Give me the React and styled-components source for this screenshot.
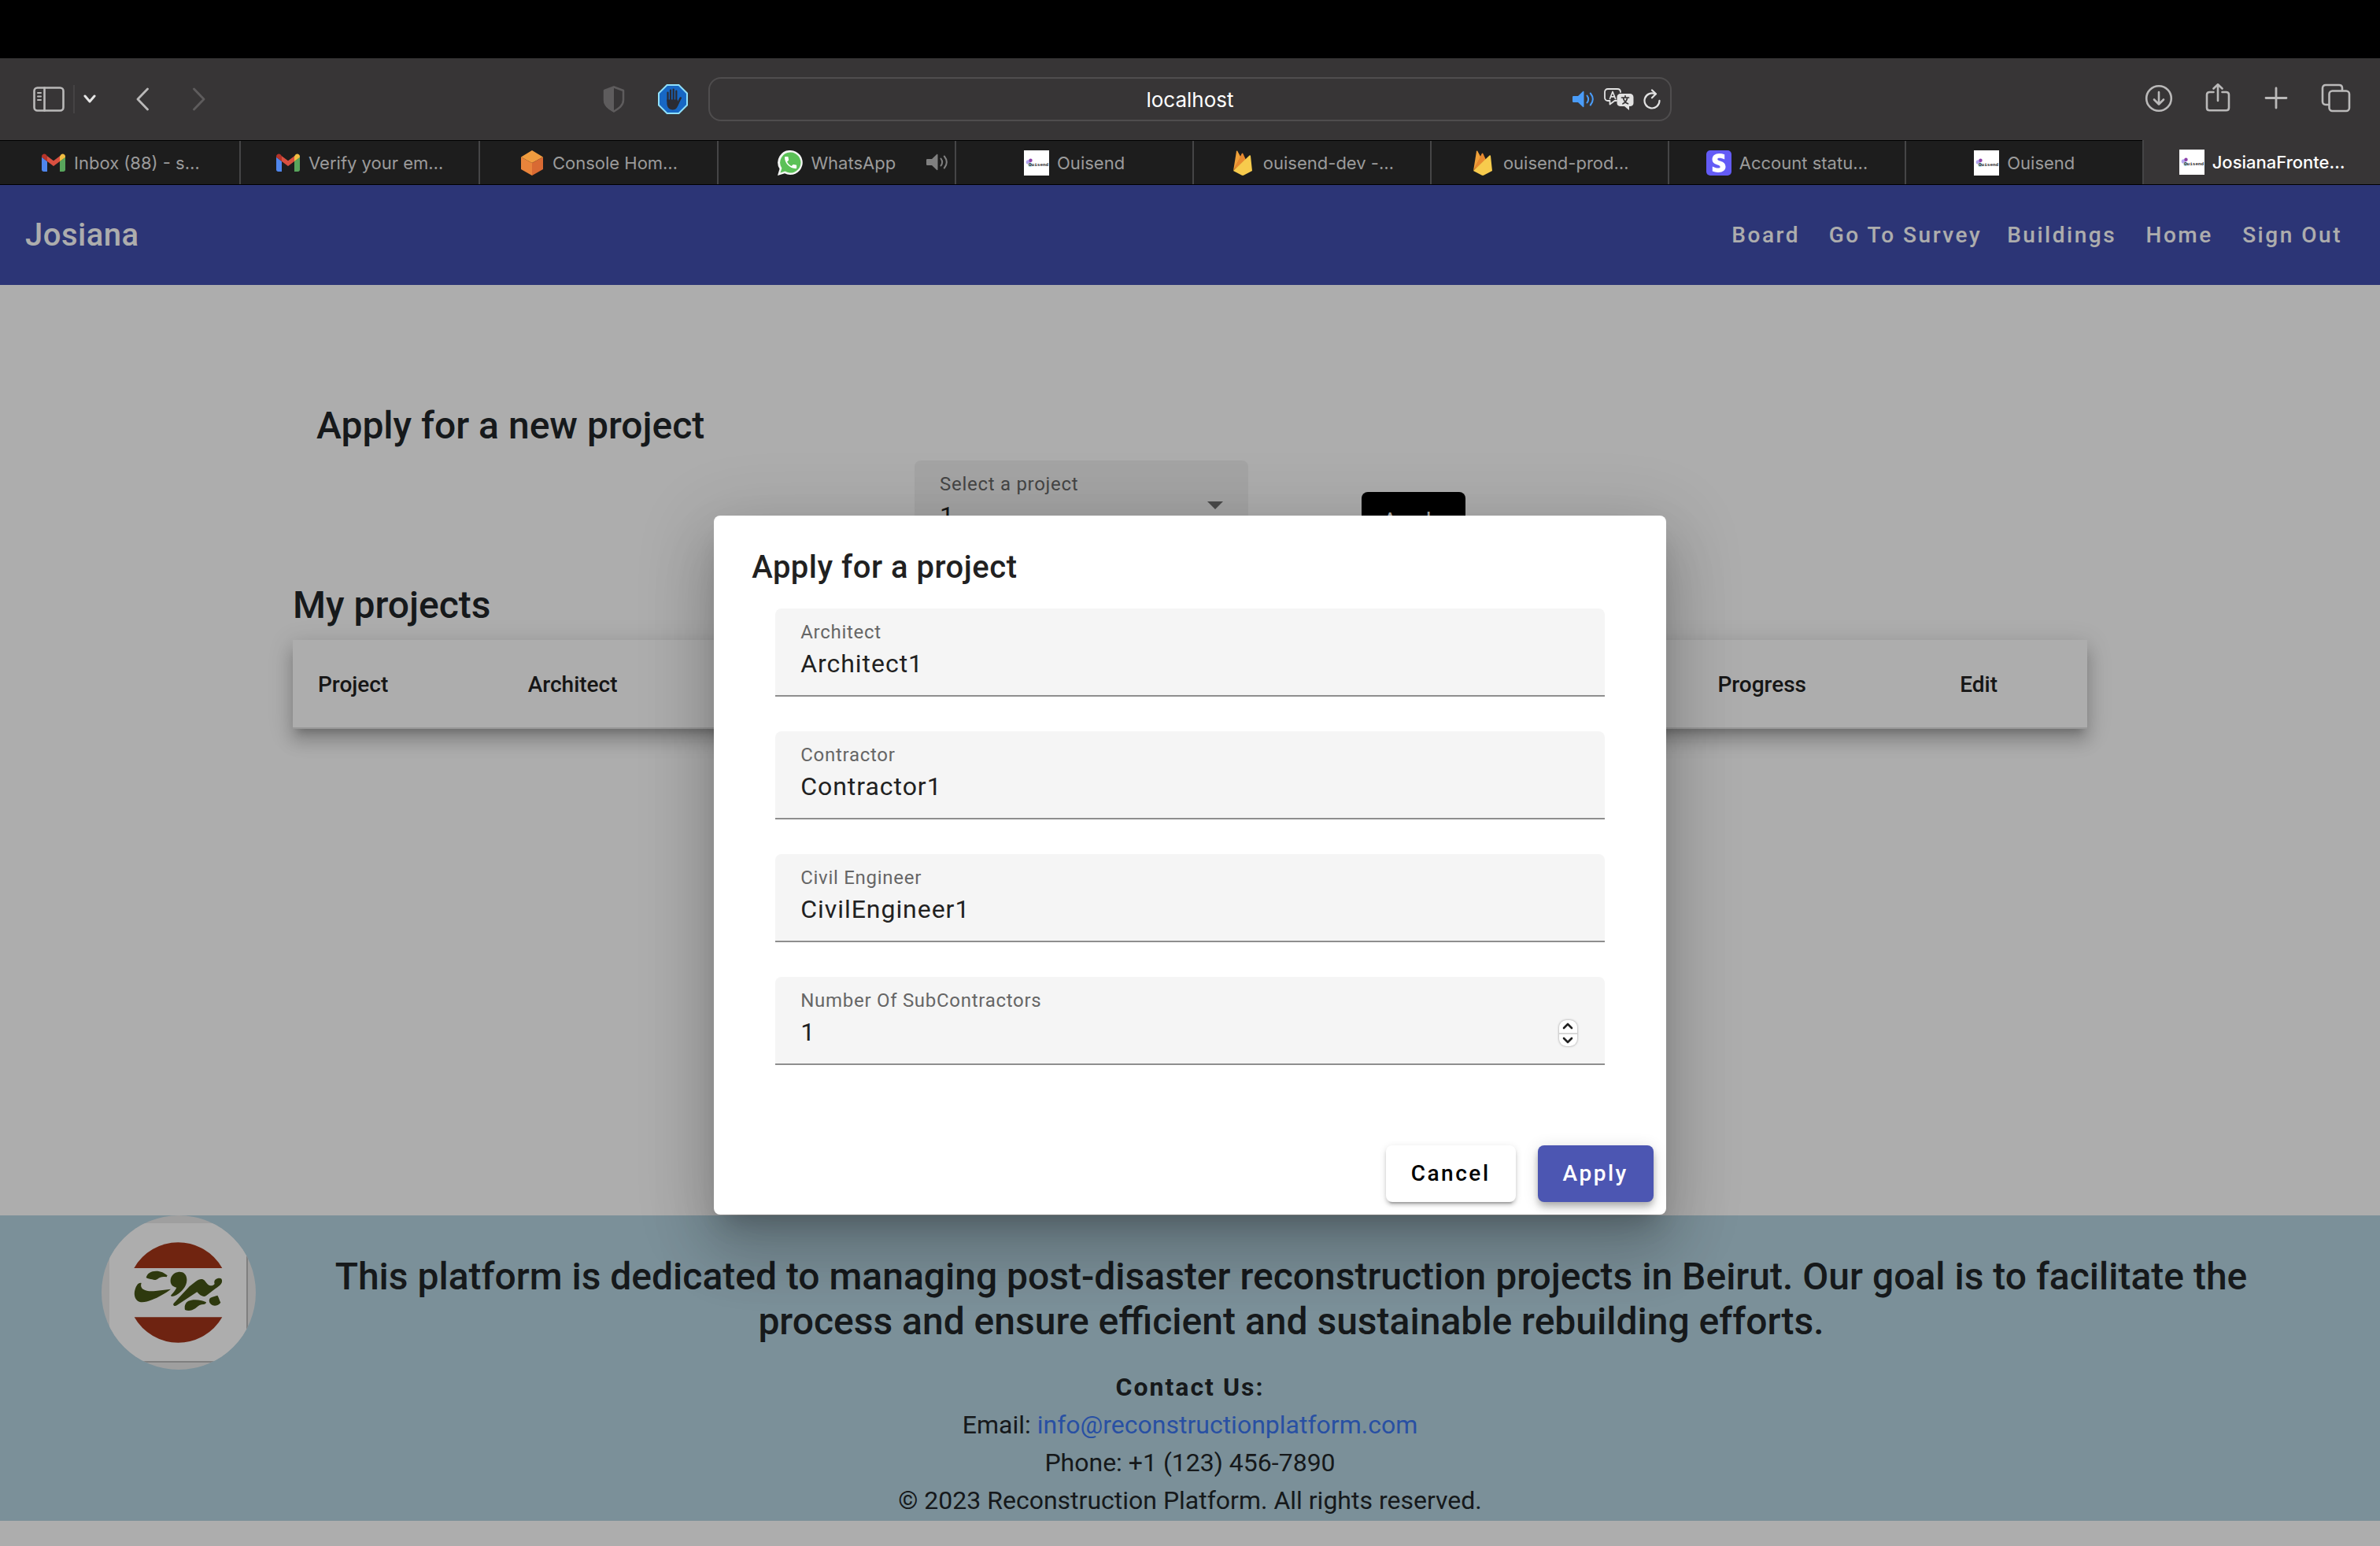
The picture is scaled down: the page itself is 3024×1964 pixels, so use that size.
import React from 'react';
import styled, { createGlobalStyle } from 'styled-components';
import { FaStripeS } from 'react-icons/fa';

const GlobalStyle = createGlobalStyle`
  *, *::before, *::after { box-sizing: border-box; }
  html, body, #root { height: 100%; }
  body { margin: 0; background: #000; font-family: Roboto, "Noto Sans", sans-serif; }
  h1, h2, p { margin: 0; }
  button, input, select { font: inherit; color: inherit; letter-spacing: inherit; }
  svg { display: block; flex: none; }
`;

const Screen = styled.div`
  min-height: 100%;
  display: flex;
  flex-direction: column;
`;

/* ---------- browser window ---------- */

const Chrome = styled.header`
  padding-top: 74px;
  font-family: Inter, "Open Sans", sans-serif;
  background: #000;
`;

const Toolbar = styled.div`
  display: grid;
  grid-template-columns: 1fr minmax(0, 1224px) 1fr;
  align-items: center;
  height: 104px;
  background: #373536;
`;

const ToolGroup = styled.div`
  display: flex;
  align-items: center;
  justify-content: ${(p) => (p.$end ? 'flex-end' : 'flex-start')};
  gap: ${(p) => p.$gap || 0}px;
  padding: ${(p) => p.$pad || 0};
  margin-left: ${(p) => (p.$push ? 'auto' : 0)};
`;

const ToolButton = styled.button`
  display: flex;
  align-items: center;
  justify-content: center;
  padding: 0;
  border: 0;
  background: none;
  color: ${(p) => (p.$dim ? '#5e5c5d' : '#bab9b9')};
`;

const ToolDivider = styled.span`
  width: 2px;
  height: 36px;
  background: #454344;
`;

const AddressBar = styled.div`
  display: grid;
  grid-template-columns: 120px 1fr 120px;
  align-items: center;
  height: 56px;
  border: 2px solid #4f4d4e;
  border-radius: 16px;
  color: #e2e2e2;
`;

const AddressInput = styled.input`
  grid-column: 2;
  min-width: 0;
  width: 100%;
  height: 40px;
  padding: 0;
  border: 0;
  outline: 0;
  background: none;
  color: #fff;
  font-size: 26px;
  text-align: center;
`;

const TabStrip = styled.nav`
  display: grid;
  grid-template-columns: repeat(3, minmax(0, 304fr)) repeat(7, minmax(0, 302fr));
  height: 57px;
`;

const Tab = styled.button`
  position: relative;
  display: flex;
  align-items: center;
  justify-content: center;
  gap: 10px;
  margin: ${(p) => (p.$active ? '0 0 1px' : '1px 0 1px')};
  padding: 0;
  border: 0;
  border-left: 2px solid ${(p) => (p.$first ? 'transparent' : '#454546')};
  background: ${(p) => (p.$active ? '#373536' : '#1d1d1d')};
  color: ${(p) => (p.$active ? '#fff' : '#9b9b9b')};
  font-size: 22px;
  font-weight: ${(p) => (p.$active ? 500 : 400)};
  white-space: nowrap;
`;

const TabAudio = styled.span`
  position: absolute;
  right: 8px;
  top: 16px;
  color: #808080;
`;

/* ---------- page ---------- */

const Page = styled.div`
  position: relative;
  flex: 1;
  display: flex;
  flex-direction: column;
  padding-bottom: 32px;
  background: #fff;
  color: #212529;
  overflow: hidden;
`;

const AppBar = styled.div`
  display: flex;
  align-items: center;
  justify-content: space-between;
  height: 127px;
  padding: 0 32px;
  background: #424fae;
  color: #fff;
`;

const Brand = styled.h1`
  font-size: 40px;
  line-height: 64px;
  font-weight: 500;
  letter-spacing: 0.0125em;
`;

const NavList = styled.nav`
  display: flex;
`;

const NavLink = styled.a`
  min-width: 128px;
  padding: 0 16px;
  font-size: 28px;
  line-height: 72px;
  font-weight: 500;
  letter-spacing: 0.09em;
  text-align: center;
  text-decoration: none;
  color: inherit;
`;

const Main = styled.main`
  flex: 1;
  width: 100%;
  max-width: 2280px;
  margin: 0 auto;
  padding-top: 150px;
`;

const Heading = styled.h2`
  padding-left: ${(p) => (p.$inset ? 30 : 0)}px;
  font-size: 48px;
  line-height: 58px;
  font-weight: 500;
`;

const ApplyRow = styled.div`
  display: flex;
  justify-content: center;
  align-items: flex-end;
  gap: 144px;
  margin: 15px 0 43px;
`;

const FieldBox = styled.div`
  position: relative;
  display: flex;
  flex-direction: column;
  gap: 2px;
  width: ${(p) => (p.$narrow ? '424px' : '100%')};
  height: 112px;
  padding: 16px 32px;
  border-bottom: 2px solid #8e8e8e;
  border-radius: 8px 8px 0 0;
  background: ${(p) => (p.$narrow ? '#f2f2f2' : '#f5f5f5')};
`;

const FieldLabel = styled.label`
  font-size: 24px;
  line-height: 28px;
  letter-spacing: 0.03em;
  color: #666;
`;

const FieldLine = styled.div`
  display: flex;
  align-items: center;
  height: 48px;
`;

const FieldInput = styled.input`
  flex: 1;
  min-width: 0;
  height: 48px;
  padding: 0;
  border: 0;
  outline: 0;
  background: none;
  color: #212121;
  font-size: 32px;
  letter-spacing: 0.03em;
  appearance: textfield;
  &::-webkit-inner-spin-button,
  &::-webkit-outer-spin-button { appearance: none; margin: 0; }
`;

const FieldSelect = styled.select`
  flex: 1;
  height: 48px;
  padding: 0;
  border: 0;
  outline: 0;
  background: none;
  color: #212121;
  font-size: 32px;
  appearance: none;
`;

const SelectArrow = styled.svg`
  position: absolute;
  right: 32px;
  top: 52px;
  pointer-events: none;
`;

const Stepper = styled.span`
  display: flex;
  flex-direction: column;
  width: 23px;
  height: 33px;
  margin: 4px 3px 0 0;
  border-radius: 9px;
  background: #fff;
  box-shadow: 0 0 3px rgba(0, 0, 0, 0.4);
`;

const StepButton = styled.button`
  flex: 1;
  display: flex;
  align-items: center;
  justify-content: center;
  padding: 0;
  border: 0;
  border-bottom: ${(p) => (p.$up ? '2px solid #d8d8d8' : '0')};
  background: none;
  color: #222;
`;

const DarkButton = styled.button`
  min-width: 132px;
  height: 72px;
  padding: 0 24px;
  border: 0;
  border-radius: 8px;
  background: #000;
  color: #fff;
  font-size: 28px;
  letter-spacing: 0.06em;
`;

const ProjectTable = styled.table`
  width: 100%;
  margin-top: 15px;
  border-collapse: collapse;
  table-layout: fixed;
  background: #fff;
  box-shadow: 0 10px 10px -6px rgba(0, 0, 0, 0.2), 0 16px 20px 2px rgba(0, 0, 0, 0.14),
    0 6px 28px 4px rgba(0, 0, 0, 0.12);
`;

const HeadCell = styled.th`
  width: ${(p) => p.$width};
  height: 112px;
  padding: 2px 32px 0;
  border-bottom: 2px solid #e0e0e0;
  color: #212121;
  font-size: 28px;
  font-weight: 500;
  text-align: left;
`;

const Footer = styled.footer`
  padding-bottom: 2px;
  background: #b5d5e2;
  text-align: center;
`;

const FooterTop = styled.div`
  display: flex;
  align-items: flex-start;
  height: 194px;
  padding: 0 68px 0 129px;
`;

const Mission = styled.h2`
  flex: 1;
  padding: 49px 24px 0;
  font-size: 48px;
  line-height: 57px;
  font-weight: 500;
`;

const Contact = styled.address`
  font-size: 32px;
  line-height: 48px;
  font-style: normal;
`;

const ContactTitle = styled.strong`
  letter-spacing: 2px;
`;

const MailLink = styled.a`
  color: #3c76f0;
  text-decoration: none;
`;

/* ---------- dialog ---------- */

const Backdrop = styled.div`
  position: absolute;
  inset: 0;
  display: flex;
  align-items: center;
  justify-content: center;
  padding-bottom: 2px;
  background: rgba(0, 0, 0, 0.32);
`;

const Dialog = styled.form`
  width: 40%;
  border-radius: 8px;
  background: #fff;
  box-shadow: 0 22px 30px -14px rgba(0, 0, 0, 0.2), 0 48px 76px 6px rgba(0, 0, 0, 0.14),
    0 18px 92px 16px rgba(0, 0, 0, 0.12);
`;

const DialogTitle = styled.h2`
  padding: 34px 48px 20px;
  color: #212121;
  font-size: 40px;
  line-height: 64px;
  font-weight: 500;
  letter-spacing: 0.0125em;
`;

const DialogFields = styled.div`
  display: flex;
  flex-direction: column;
  gap: 44px;
  padding: 0 78px 86px;
`;

const DialogActions = styled.div`
  display: flex;
  justify-content: flex-end;
  gap: 28px;
  padding: 16px;
`;

const RaisedButton = styled.button`
  height: 72px;
  padding: 0 32px;
  border: 0;
  border-radius: 8px;
  background: ${(p) => (p.$primary ? '#4c56b2' : '#fff')};
  color: ${(p) => (p.$primary ? '#fff' : '#000')};
  font-size: 28px;
  font-weight: 500;
  letter-spacing: 0.09em;
  box-shadow: ${(p) =>
    p.$primary
      ? '0 4px 8px -2px rgba(0,0,0,.2), 0 8px 10px rgba(0,0,0,.14), 0 2px 20px rgba(0,0,0,.12)'
      : '0 6px 2px -4px rgba(0,0,0,.2), 0 4px 4px rgba(0,0,0,.14), 0 2px 10px rgba(0,0,0,.12)'};
`;

/* ---------- icons ---------- */

const stroke = (width) => ({
  fill: 'none',
  stroke: 'currentColor',
  strokeWidth: width,
  strokeLinecap: 'round',
  strokeLinejoin: 'round',
});

const SidebarIcon = () => (
  <svg width="40" height="32" viewBox="0 0 40 32" {...stroke(2.6)}>
    <rect x="1.5" y="1.5" width="37" height="29" rx="4" />
    <path d="M14.5 1.5v29" />
    <path d="M6 8h4M6 12.500h4M6 17h4" strokeWidth="2" />
  </svg>
);
const ChevronDown = () => (
  <svg width="16" height="12" viewBox="0 0 16 12" {...stroke(3)} stroke="#e6e6e6">
    <path d="M2 2l6 7 6-7" />
  </svg>
);
const Back = () => (
  <svg width="16" height="30" viewBox="0 0 16 30" {...stroke(2.8)}>
    <path d="M14.500 2L2 15l12.500 13" />
  </svg>
);
const Forward = () => (
  <svg width="16" height="30" viewBox="0 0 16 30" {...stroke(2.8)}>
    <path d="M1.500 2L14 15 1.500 28" />
  </svg>
);
const Shield = () => (
  <svg width="28" height="34" viewBox="0 0 28 34">
    <path d="M14 1.500L26 6v12c0 7-6 11-12 14.500C8 29 2 25 2 18V6z" {...stroke(2.500)} />
    <path d="M14 1L1 6v12c0 7.500 6.500 12 13 15.500z" fill="currentColor" />
  </svg>
);
const StopHand = () => (
  <svg width="38" height="38" viewBox="0 0 38 38">
    <path d="M11.500 1h15L37 11.500v15L26.500 37h-15L1 26.500v-15z" fill="#1767c4" stroke="#8fe0fb" strokeWidth="2" />
    <g stroke="#2b2b33" strokeLinecap="round" fill="none">
      <path d="M12.500 10.500v11M16 7.500v13M19.700 6.500v13M23.300 8.500v12" strokeWidth="2.200" />
      <path d="M28.700 17.500L24.500 26" strokeWidth="2.600" />
    </g>
    <path d="M11.400 19.500h13l2.100 4c-1.500 6-3.500 9-7.700 9-5 0-7.400-4-7.400-8.500z" fill="#2b2b33" />
  </svg>
);
const Speaker = ({ color = 'currentColor' }) => (
  <svg width="28" height="22" viewBox="0 0 28 22">
    <path d="M1.500 7h5.500L13 1.200c.8-.7 1.500-.3 1.500.6v18.400c0 .9-.8 1.300-1.500.6L7 15H1.500C.6 15 0 14.600 0 13.800V8.200C0 7.400.6 7 1.500 7z" fill={color} />
    <path d="M18.500 6.500c2 2.700 2 6.300 0 9M22.800 3.500c3.800 4.700 3.800 10.300 0 15" fill="none" stroke={color} strokeWidth="2" strokeLinecap="round" />
  </svg>
);
const Translate = () => (
  <svg width="38" height="28" viewBox="0 0 38 28">
    <path d="M16 16h-2.500L7.500 20.500V16H5c-2.500 0-4-1.500-4-4V5c0-2.500 1.500-4 4-4h12c2.500 0 4 1.500 4 4" {...stroke(1.800)} />
    <path d="M7.500 13.500L11 4.500l3.500 9M8.600 10.800h4.800" {...stroke(1.700)} />
    <path d="M21 7h12c2.500 0 4.500 1.500 4.500 4.500V19c0 2.500-2 4-4.500 4h-1v5l-6-5h-5c-2.500 0-4.500-1.500-4.500-4v-7.500C16.500 8.500 18.500 7 21 7z" fill="currentColor" />
    <path d="M22.500 12h9M27 9.800V12M24 19.800c3.500-1.600 5-4 5.700-7.800M24.500 12.500c.8 3.500 2.700 6 6 7.300" {...stroke(1.700)} stroke="#373536" />
  </svg>
);
const Reload = () => (
  <svg width="22" height="26" viewBox="0 0 22 26" {...stroke(2.200)}>
    <path d="M20.500 14.800A9.500 9.500 0 1 1 15.500 6.600" />
    <path d="M11 1.500l5 4.800-5 5" />
  </svg>
);
const Download = () => (
  <svg width="40" height="40" viewBox="0 0 40 40" {...stroke(2.600)}>
    <circle cx="20" cy="19" r="15.800" />
    <path d="M20 11v15.500M14 20.500l6 6 6-6" />
  </svg>
);
const Share = () => (
  <svg width="40" height="40" viewBox="0 0 40 40" {...stroke(2.600)}>
    <path d="M14.500 11H9.500C7.500 11 6 12.200 6 14.200V31c0 2 1.500 3.300 3.500 3.300h21c2 0 3.500-1.300 3.500-3.300V14.200c0-2-1.500-3.200-3.500-3.200h-5" />
    <path d="M20 22V1.300M14.500 6.500L20 1.300 25.500 6.500" />
  </svg>
);
const Plus = () => (
  <svg width="40" height="40" viewBox="0 0 40 40" {...stroke(2.800)}>
    <path d="M19 6v25M6 18.500h26" />
  </svg>
);
const Windows = () => (
  <svg width="40" height="40" viewBox="0 0 40 40" {...stroke(2.600)}>
    <path d="M11 27H7c-2.500 0-4-1.500-4-4V6c0-2.500 1.500-4 4-4h17c2.500 0 4 1.500 4 4v3" />
    <rect x="11.500" y="9.500" width="25.500" height="25.500" rx="4" />
  </svg>
);

const Gmail = () => (
  <svg width="32" height="32" viewBox="0 0 32 32">
    <path d="M1 8.500v16C1 26 2 27 3.500 27H8V14z" fill="#4f86ec" />
    <path d="M31 8.500v16c0 1.500-1 2.500-2.500 2.500H24V14z" fill="#58a55c" />
    <path d="M24 7.500V14l7-5.200V8c0-3-3.200-4.300-5.400-2.700z" fill="#f1bd42" />
    <path d="M8 14V7.300l8 6 8-6V14l-8 6z" fill="#d95040" />
    <path d="M1 8v.8L8 14V7.300L6.400 5.300C4.200 3.700 1 5 1 8z" fill="#b5342a" />
  </svg>
);
const Cube = () => (
  <svg width="32" height="32" viewBox="0 0 32 32">
    <path d="M16 0l14 8.500L16 16 2 8.500z" fill="#f09c3f" />
    <path d="M2 8.500L16 16v16L2 24z" fill="#e9843b" />
    <path d="M30 8.500L16 16v16l14-8z" fill="#d96a33" />
  </svg>
);
const WhatsApp = () => (
  <svg width="32" height="32" viewBox="0 0 32 32">
    <path d="M16.500 0A15.500 15.500 0 1 1 9 29.200L0 32l2.500-8.500A15.500 15.500 0 0 1 16.500 0z" fill="#f4f6f4" />
    <path d="M16.500 2.500a13 13 0 1 1-7 24l-6 1.900 1.900-5.700A13 13 0 0 1 16.500 2.500z" fill="#5bc157" />
    <path transform="translate(6.500 5.500) scale(.84)" fill="#fff" d="M6.620 10.790c1.440 2.830 3.760 5.140 6.590 6.590l2.200-2.200c.27-.27.67-.36 1.020-.24 1.120.37 2.330.57 3.570.57.55 0 1 .45 1 1V20c0 .55-.45 1-1 1-9.390 0-17-7.610-17-17 0-.55.45-1 1-1h3.500c.55 0 1 .45 1 1 0 1.250.2 2.450.57 3.570.11.35.03.74-.25 1.020z" />
  </svg>
);
const Ouisend = () => (
  <svg width="32" height="32" viewBox="0 0 32 32">
    <rect width="32" height="32" fill="#fff" />
    <circle cx="5.500" cy="15" r="2.800" fill="#b3a6ee" />
    <circle cx="8.500" cy="12.700" r="2.200" fill="#8a3fa8" />
    <circle cx="8" cy="18.500" r="2.800" fill="#b5e4f5" />
    <text x="6" y="19.500" fontSize="6" fontWeight="700" fontFamily="Liberation Mono, monospace" fill="#222">Ouisend</text>
  </svg>
);
const Firebase = () => (
  <svg width="32" height="32" viewBox="0 0 32 32">
    <path d="M4 26L8 1.200c.2-.8 1-.9 1.400-.2l4 7.500L4 26z" fill="#f0a13a" />
    <path d="M4 26L14.800 4c.4-.7 1.200-.7 1.500 0L20 12z" fill="#e8892f" />
    <path d="M4 26L24.500 6.500c.6-.6 1.400-.3 1.500.5L28 26l-10.500 5.600c-1 .5-2 .5-3 0z" fill="#f7cb4d" />
  </svg>
);
const StripeTile = styled.span`
  display: flex;
  align-items: center;
  justify-content: center;
  width: 32px;
  height: 32px;
  border-radius: 5px;
  background: #635bf6;
  color: #fff;
  font-size: 24px;
`;
const Stripe = () => (
  <StripeTile>
    <FaStripeS />
  </StripeTile>
);

const BeirutLogo = () => (
  <svg width="196" height="196" viewBox="27 27 588 588" role="img" aria-label="Beirut">
    <defs>
      <clipPath id="disc">
        <circle cx="321" cy="321" r="294" />
      </clipPath>
    </defs>
    <g clipPath="url(#disc)">
      <rect x="27" y="27" width="588" height="588" fill="#ebebeb" />
      <rect x="57" y="57" width="524" height="526" fill="#fff" />
      <path d="M582 57v528M57 585h528" stroke="#bcbcbc" strokeWidth="6" />
    </g>
    <path d="M151 228a193 193 0 0 1 336 0z" fill="#a63619" />
    <path d="M152 415a193 193 0 0 0 335 0z" fill="#a2341a" />
    <g fill="#445415">
      <path d="M197 264c4-16 18-25 38-25 18 0 32 7 43 17l-3 6c-14-3-25-1-34 7-7 5-13 5-21 2-8-2-16-2-23-7z" />
      <path d="M179 285c-4 10 0 20 8 24 9 7 28 8 46 6l58-7c-20 16-48 31-72 41-22 9-42 12-53 5-12-8-17-27-11-45 4-12 11-27 24-24z" />
      <path d="M290 272c2-16 14-28 32-30 17-1 29 9 30 28 1 17-7 33-22 47-12 11-24 18-36 19l-3-4c8-9 16-17 22-30-14-3-25-12-23-30z" />
      <path d="M302 362l60-64 24-19c12-10 26-13 34-4 6 7 12 18 23 20 7 0 12-3 15-7-4-12 2-18 12-21 14-3 19 4 15 17-6 11-16 16-25 23l-34 26c-8 6-17 2-27-6l-8-8-77 51c-8 5-17 0-12-8z" />
      <path d="M345 387c-4-20 5-34 24-37 20-3 40 0 57 8-1 6-4 8-10 8-16 0-22 8-32 16-12 8-26 10-39 5z" />
      <path d="M441 342c8-5 18-6 28-10 5 6 7 19 12 27-7 9-19 15-30 11-12-5-18-19-10-28z" />
    </g>
  </svg>
);

/* ---------- content ---------- */

const tabs = [
  { icon: Gmail, title: 'Inbox (88) - s…' },
  { icon: Gmail, title: 'Verify your em…' },
  { icon: Cube, title: 'Console Hom…' },
  { icon: WhatsApp, title: 'WhatsApp', audio: true },
  { icon: Ouisend, title: 'Ouisend' },
  { icon: Firebase, title: 'ouisend-dev -…' },
  { icon: Firebase, title: 'ouisend-prod…' },
  { icon: Stripe, title: 'Account statu…' },
  { icon: Ouisend, title: 'Ouisend' },
  { icon: Ouisend, title: 'JosianaFronte…', active: true },
];

const links = ['Board', 'Go To Survey', 'Buildings', 'Home', 'Sign Out'];

const columns = [
  { name: 'Project', width: '11.700%' },
  { name: 'Architect', width: '66.300%' },
  { name: 'Progress', width: '13.500%' },
  { name: 'Edit', width: '8.500%' },
];

const fields = [
  { id: 'architect', label: 'Architect', value: 'Architect1' },
  { id: 'contractor', label: 'Contractor', value: 'Contractor1' },
  { id: 'engineer', label: 'Civil Engineer', value: 'CivilEngineer1' },
  { id: 'subcontractors', label: 'Number Of SubContractors', value: '1', type: 'number' },
];

function Field({ id, label, value, type = 'text' }) {
  return (
    <FieldBox>
      <FieldLabel htmlFor={id}>{label}</FieldLabel>
      <FieldLine>
        <FieldInput id={id} type={type} defaultValue={value} />
        {type === 'number' && (
          <Stepper>
            <StepButton type="button" $up aria-label="Increase">
              <svg width="14" height="9" viewBox="0 0 14 9" {...stroke(2.600)}>
                <path d="M2 7l5-5 5 5" />
              </svg>
            </StepButton>
            <StepButton type="button" aria-label="Decrease">
              <svg width="14" height="9" viewBox="0 0 14 9" {...stroke(2.600)}>
                <path d="M2 2l5 5 5-5" />
              </svg>
            </StepButton>
          </Stepper>
        )}
      </FieldLine>
    </FieldBox>
  );
}

function BrowserChrome() {
  return (
    <Chrome>
      <Toolbar>
        <ToolGroup $pad="0 26px 0 42px">
          <ToolGroup $gap={11}>
            <ToolButton aria-label="Sidebar"><SidebarIcon /></ToolButton>
            <ToolDivider />
            <ToolButton aria-label="Tab groups"><ChevronDown /></ToolButton>
          </ToolGroup>
          <ToolGroup $gap={56} $pad="0 0 0 51px">
            <ToolButton aria-label="Back"><Back /></ToolButton>
            <ToolButton aria-label="Forward" $dim><Forward /></ToolButton>
          </ToolGroup>
          <ToolGroup $gap={42} $push>
            <ToolButton aria-label="Privacy report" $dim><Shield /></ToolButton>
            <ToolButton aria-label="Content blocker"><StopHand /></ToolButton>
          </ToolGroup>
        </ToolGroup>
        <AddressBar>
          <AddressInput aria-label="Address" defaultValue="localhost" />
          <ToolGroup $gap={12} $end $pad="0 12px 0 0">
            <Speaker color="#4a9cf8" />
            <Translate />
            <Reload />
          </ToolGroup>
        </AddressBar>
        <ToolGroup $gap={35} $end $pad="0 36px 0 0">
          <ToolButton aria-label="Downloads"><Download /></ToolButton>
          <ToolButton aria-label="Share"><Share /></ToolButton>
          <ToolButton aria-label="New tab"><Plus /></ToolButton>
          <ToolButton aria-label="Tab overview"><Windows /></ToolButton>
        </ToolGroup>
      </Toolbar>
      <TabStrip>
        {tabs.map(({ icon: Icon, title, active, audio }, i) => (
          <Tab key={i} $active={active} $first={i === 0}>
            <Icon />
            {title}
            {audio && <TabAudio><Speaker /></TabAudio>}
          </Tab>
        ))}
      </TabStrip>
    </Chrome>
  );
}

export default function App() {
  return (
    <Screen>
      <GlobalStyle />
      <BrowserChrome />
      <Page>
        <AppBar>
          <Brand>Josiana</Brand>
          <NavList>
            {links.map((name) => (
              <NavLink key={name} href="#">{name}</NavLink>
            ))}
          </NavList>
        </AppBar>
        <Main>
          <Heading $inset>Apply for a new project</Heading>
          <ApplyRow>
            <FieldBox $narrow>
              <FieldLabel htmlFor="project">Select a project</FieldLabel>
              <FieldLine>
                <FieldSelect id="project" defaultValue="1">
                  <option value="1">1</option>
                </FieldSelect>
              </FieldLine>
              <SelectArrow width="20" height="10" viewBox="0 0 20 10">
                <path d="M0 0h20L10 10z" fill="#6e6e6e" />
              </SelectArrow>
            </FieldBox>
            <DarkButton>Apply</DarkButton>
          </ApplyRow>
          <Heading>My projects</Heading>
          <ProjectTable>
            <thead>
              <tr>
                {columns.map((c) => (
                  <HeadCell key={c.name} $width={c.width}>{c.name}</HeadCell>
                ))}
              </tr>
            </thead>
          </ProjectTable>
        </Main>
        <Footer>
          <FooterTop>
            <BeirutLogo />
            <Mission>
              This platform is dedicated to managing post-disaster reconstruction projects in Beirut. Our goal is
              to facilitate the process and ensure efficient and sustainable rebuilding efforts.
            </Mission>
          </FooterTop>
          <Contact>
            <p><ContactTitle>Contact Us:</ContactTitle></p>
            <p>Email: <MailLink href="mailto:info@reconstructionplatform.com">info@reconstructionplatform.com</MailLink></p>
            <p>Phone: +1 (123) 456-7890</p>
            <p>© 2023 Reconstruction Platform. All rights reserved.</p>
          </Contact>
        </Footer>
        <Backdrop>
          <Dialog role="dialog" aria-labelledby="dialog-title" onSubmit={(e) => e.preventDefault()}>
            <DialogTitle id="dialog-title">Apply for a project</DialogTitle>
            <DialogFields>
              {fields.map((f) => (
                <Field key={f.id} {...f} />
              ))}
            </DialogFields>
            <DialogActions>
              <RaisedButton type="button">Cancel</RaisedButton>
              <RaisedButton $primary>Apply</RaisedButton>
            </DialogActions>
          </Dialog>
        </Backdrop>
      </Page>
    </Screen>
  );
}
